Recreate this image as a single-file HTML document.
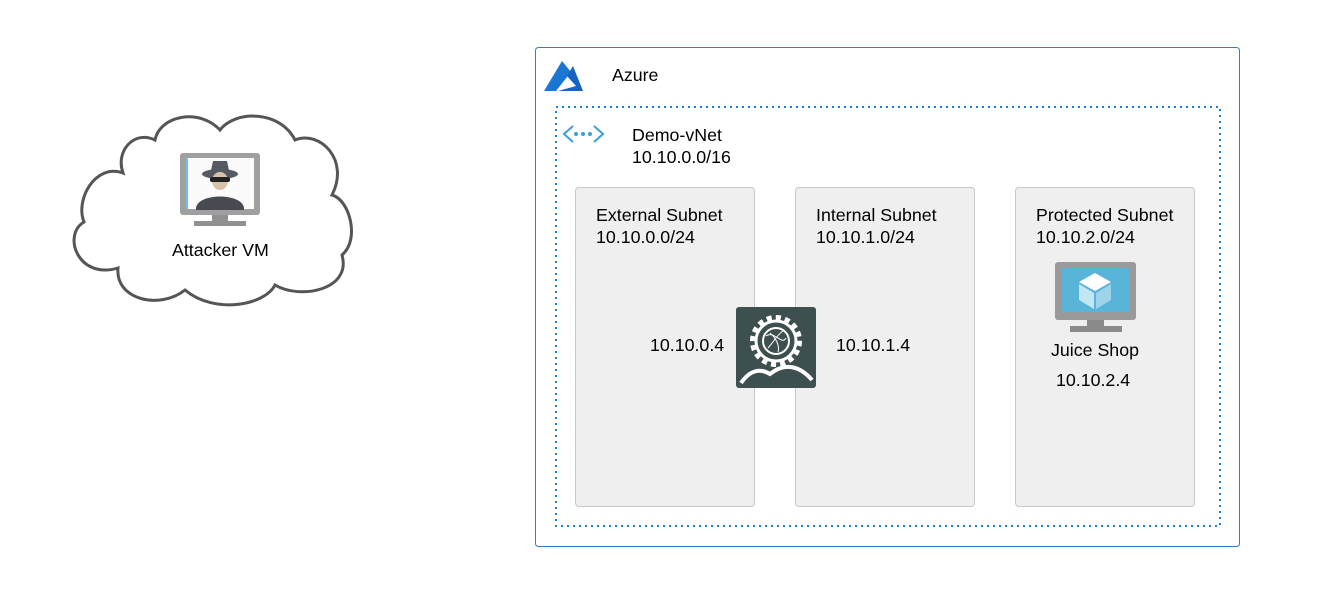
<!DOCTYPE html>
<html><head><style>
body{margin:0;width:1320px;height:594px;background:#fff;position:relative;overflow:hidden;font-family:"Liberation Sans",sans-serif;color:#000}
.t{position:absolute;font-size:17.8px;line-height:22px;white-space:nowrap}
.sub{position:absolute;top:187px;width:180px;height:320px;background:#efefef;border:1px solid #c9c9c9;border-radius:4px;box-sizing:border-box}
</style></head><body>
<svg width="1320" height="594" style="position:absolute;left:0;top:0">
<path d="M123,173 C95,163 75,200 84,222 C62,235 78,280 118,268 C115,300 160,310 185,290 C215,315 265,305 275,285 C300,300 352,290 342,255 C360,240 350,200 332,195 C350,160 320,130 295,140 C280,110 235,110 220,130 C200,108 160,115 155,140 C135,130 115,150 123,173 Z" fill="#fff" stroke="#555" stroke-width="3"/>
<rect x="180" y="153" width="80" height="62" rx="3" fill="#a0a0a0"/>
<rect x="186" y="158" width="68" height="51" fill="#fbfbfb"/>
<rect x="186" y="158" width="2" height="51" fill="#6cc1f0"/>
<rect x="212" y="215" width="16" height="6" fill="#909090"/>
<rect x="194" y="221" width="52" height="5" fill="#909090"/>
<ellipse cx="220" cy="174" rx="18" ry="5" fill="#555a63"/>
<path d="M210,175 L213,161 L227,161 L230,175Z" fill="#555a63"/>
<ellipse cx="220" cy="181" rx="8" ry="9" fill="#d8c2a8"/>
<rect x="210" y="177" width="20" height="5" rx="2" fill="#222"/>
<path d="M196,210 C194,192 246,192 244,210Z" fill="#474a50"/>
<rect x="535.5" y="47.5" width="704" height="499" rx="3" fill="none" stroke="#2d7dd2" stroke-width="1"/>
<rect x="556" y="107" width="664" height="419" fill="none" stroke="#1a85d8" stroke-width="2" stroke-dasharray="2 4"/>
<path d="M562,61 L544,91 L556,91 L571,72Z" fill="#1976d2"/>
<path d="M573,66 L583,91 L558,91 L576,86 L567,76Z" fill="#1565c0"/>
<path d="M573,126 L564,134 L573,142" fill="none" stroke="#3a9fd8" stroke-width="2"/>
<path d="M594,126 L603,134 L594,142" fill="none" stroke="#3a9fd8" stroke-width="2"/>
<circle cx="576" cy="134" r="2" fill="#3a9fd8"/><circle cx="583" cy="134" r="2" fill="#3a9fd8"/><circle cx="590" cy="134" r="2" fill="#3a9fd8"/>
</svg>
<div class="sub" style="left:575px"></div>
<div class="sub" style="left:795px"></div>
<div class="sub" style="left:1015px"></div>
<svg width="1320" height="594" style="position:absolute;left:0;top:0">
<rect x="736" y="307" width="80" height="81" rx="3" fill="#3d4f4f"/>
<circle cx="776" cy="341" r="23" fill="none" stroke="#fff" stroke-width="6" stroke-dasharray="5 4"/>
<circle cx="776" cy="341" r="20" fill="none" stroke="#fff" stroke-width="3"/>
<circle cx="776" cy="341" r="13" fill="none" stroke="#fff" stroke-width="2"/>
<path d="M766,336 C774,330 782,346 786,338 M768,348 C775,340 778,334 783,331 M770,333 C776,338 780,346 778,352" stroke="#fff" fill="none" stroke-width="1"/>
<path d="M741,383 C750,370 760,368 770,374 C785,362 800,366 812,380" fill="none" stroke="#fff" stroke-width="4"/>
<rect x="1055" y="262" width="81" height="58" rx="3" fill="#9a9a9a"/>
<rect x="1062" y="268" width="67" height="44" fill="#59b4d9"/>
<rect x="1087" y="320" width="17" height="6" fill="#8a8a8a"/>
<rect x="1070" y="326" width="52" height="6" fill="#8a8a8a"/>
<path d="M1095,273 L1111,282 L1095,291 L1079,282Z" fill="#fff"/>
<path d="M1079,284 L1094,293 L1094,309 L1079,300Z" fill="#c3e6f5"/>
<path d="M1096,293 L1111,284 L1111,300 L1096,309Z" fill="#9ed3ea"/>
</svg>
<div class="t" style="left:172px;top:239px">Attacker VM</div>
<div class="t" style="left:612px;top:64px">Azure</div>
<div class="t" style="left:632px;top:124px">Demo-vNet<br>10.10.0.0/16</div>
<div class="t" style="left:596px;top:204px">External Subnet<br>10.10.0.0/24</div>
<div class="t" style="left:816px;top:204px">Internal Subnet<br>10.10.1.0/24</div>
<div class="t" style="left:1036px;top:204px">Protected Subnet<br>10.10.2.0/24</div>
<div class="t" style="left:650px;top:334px">10.10.0.4</div>
<div class="t" style="left:836px;top:334px">10.10.1.4</div>
<div class="t" style="left:1051px;top:339px">Juice Shop</div>
<div class="t" style="left:1056px;top:369px">10.10.2.4</div>
</body></html>
